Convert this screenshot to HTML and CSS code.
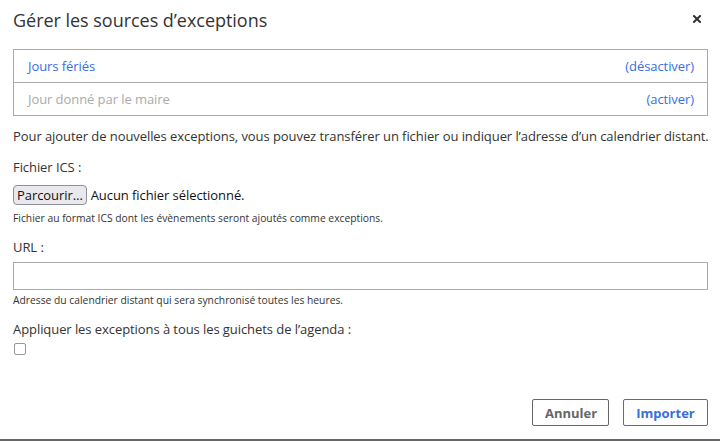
FILE: index.html
```html
<!DOCTYPE html>
<html lang="fr">
<head>
<meta charset="utf-8">
<link rel="stylesheet" href="styles.css">
</head>
<body>
<div class="dialog">
  <div class="header">
    <h1 class="title">Gérer les sources d’exceptions</h1>
    <span class="close"><svg width="8" height="8" viewBox="0 0 8 8"><path d="M1 1L7 7M7 1L1 7" stroke="#333" stroke-width="2" stroke-linecap="square"/></svg></span>
  </div>
  <div class="content">
    <ul class="sources">
      <li class="source"><span class="name active">Jours fériés</span><a class="toggle">(désactiver)</a></li>
      <li class="source"><span class="name inactive">Jour donné par le maire</span><a class="toggle">(activer)</a></li>
    </ul>
    <p class="intro">Pour ajouter de nouvelles exceptions, vous pouvez transférer un fichier ou indiquer l’adresse d’un calendrier distant.</p>
    <div class="field">
      <label class="label">Fichier ICS :</label>
      <div class="file"><span class="file-btn">Parcourir…</span><span class="file-name">Aucun fichier sélectionné.</span></div>
      <p class="hint">Fichier au format ICS dont les évènements seront ajoutés comme exceptions.</p>
    </div>
    <div class="field">
      <label class="label">URL :</label>
      <input class="url" type="text">
      <p class="hint hint-tight">Adresse du calendrier distant qui sera synchronisé toutes les heures.</p>
    </div>
    <div class="field">
      <label class="label">Appliquer les exceptions à tous les guichets de l’agenda :</label>
      <span class="check"></span>
    </div>
  </div>
  <div class="footer">
    <button class="btn cancel">Annuler</button>
    <button class="btn primary">Importer</button>
  </div>
</div>
</body>
</html>
```
FILE: styles.css
```css
html, body {
  margin: 0;
  padding: 0;
  background: #fff;
}
body {
  font-family: "Open Sans", sans-serif;
  color: #333;
  font-size: 13px;
  letter-spacing: -0.07px;
}
.dialog {
  height: 439px;
  border-bottom: 2px solid #666;
  display: flex;
  flex-direction: column;
  padding: 0 12px 0 13px;
}
.header {
  display: flex;
  align-items: center;
  justify-content: space-between;
  height: 40px;
}
.title {
  margin: 0;
  font-size: 18px;
  font-weight: 400;
  color: #333;
  letter-spacing: -0.03px;
}
.close {
  display: flex;
  margin-right: 7px;
  margin-top: -2px;
}
.content {
  flex: 1;
  padding-top: 9px;
}
.sources {
  list-style: none;
  margin: 0;
  padding: 0;
  border: 1px solid #aaa;
}
.source {
  display: flex;
  justify-content: space-between;
  align-items: center;
  height: 32px;
  padding: 0 13px 0 14px;
}
.source + .source {
  border-top: 1px solid #aaa;
}
.active, .toggle {
  color: #386ede;
}
.inactive {
  color: #aaa;
}
.intro {
  margin: 11px 0 0;
  line-height: 18px;
  white-space: nowrap;
}
.field {
  margin-top: 13px;
}
.label {
  display: block;
  line-height: 18px;
}
.file {
  display: flex;
  align-items: center;
  margin-top: 9px;
}
.file-btn {
  box-sizing: border-box;
  height: 20px;
  padding: 0 3px;
  line-height: 18px;
  background: #e9e9ed;
  border: 1px solid #8f8f9d;
  border-radius: 4px;
  color: #111;
}
.file-name {
  margin-left: 4px;
  color: #111;
}
.hint {
  margin: 6px 0 0;
  font-size: 10.3px;
  line-height: 14px;
  letter-spacing: 0;
}
.hint-tight {
  margin-top: 3px;
}
.url {
  display: block;
  box-sizing: border-box;
  width: 100%;
  height: 28px;
  margin: 6px 0 0;
  border: 1px solid #aaa;
  border-radius: 0;
}
.check {
  display: block;
  box-sizing: border-box;
  width: 12px;
  height: 12px;
  margin-top: 5px;
  margin-left: 1px;
  border: 1px solid #999;
  border-radius: 2px;
}
.footer {
  display: flex;
  justify-content: flex-end;
  gap: 14px;
  padding-bottom: 13px;
}
.btn {
  box-sizing: border-box;
  height: 27px;
  padding: 0 12px;
  font-family: "Open Sans", sans-serif;
  font-size: 13px;
  font-weight: 700;
  background: #fff;
  border-radius: 2px;
}
.cancel {
  border: 1px solid #666;
  color: #666;
  width: 77px;
}
.primary {
  border: 1px solid #386ede;
  color: #386ede;
  width: 85px;
}
```
